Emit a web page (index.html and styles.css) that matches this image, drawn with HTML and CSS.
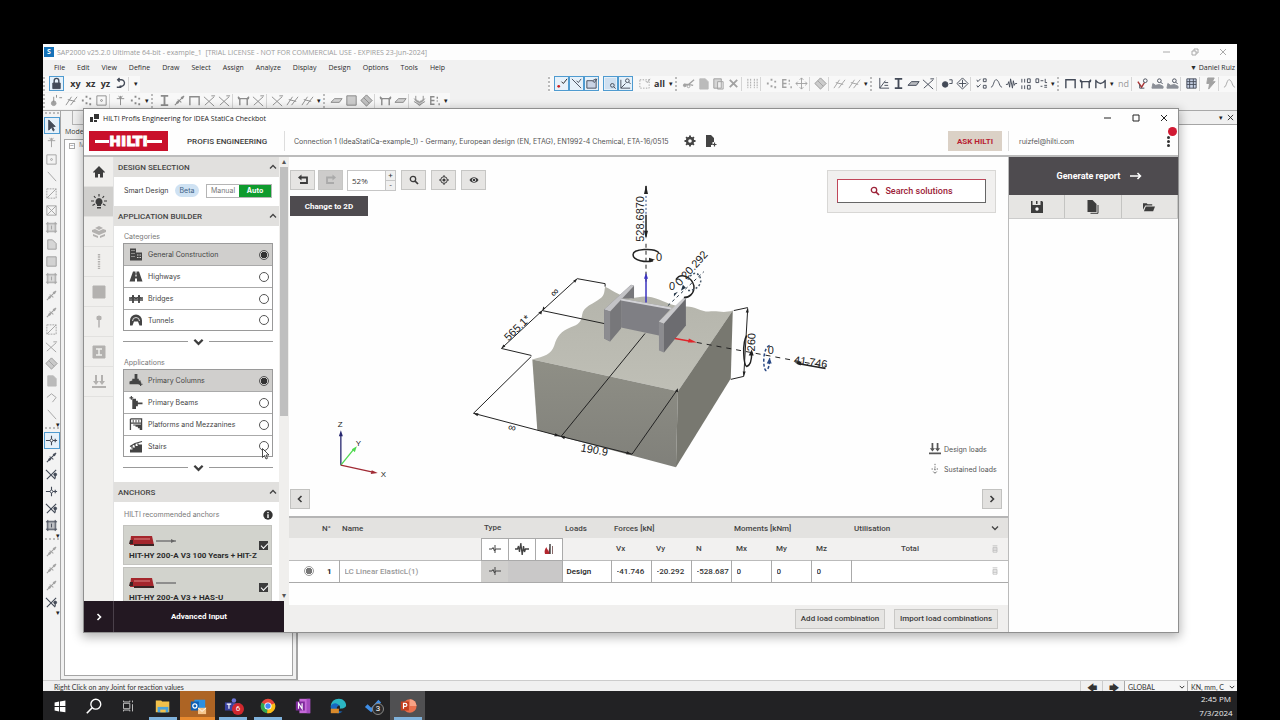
FILE: index.html
```html
<!DOCTYPE html>
<html lang="en">
<head>
<meta charset="utf-8">
<title>HILTI Profis Engineering for IDEA StatiCa Checkbot</title>
<link rel="stylesheet" href="styles.css">
</head>
<body>
<svg class="sprite" aria-hidden="true">
  <symbol id="t-lock" viewBox="0 0 14 14"><path d="M3 6.500h8V12.500H3z" fill="currentColor"/><path d="M4.500 7V4a2.500 2.500 0 0 1 5 0v3" stroke-width="1.500"/></symbol>
  <symbol id="t-rot" viewBox="0 0 14 14"><path d="M4 3h4a3.500 3.500 0 1 1-2 6.500M3 11h5M6 1L4 3l2 2" stroke-width="1.500"/></symbol>
  <symbol id="t-point" viewBox="0 0 14 14"><path d="M7 5l2 2 4-5" stroke="#222"/><circle cx="4" cy="10" r="1.500" fill="#c22" stroke="none"/></symbol>
  <symbol id="t-line" viewBox="0 0 14 14"><path d="M2 2l10 10M7 4l2 2 3-4"/></symbol>
  <symbol id="t-area" viewBox="0 0 14 14"><path d="M2 4h6l4-2v10H2z" fill="#c9d3e4"/><path d="M8 4l2 2 3-4"/></symbol>
  <symbol id="t-zoomr" viewBox="0 0 14 14"><path d="M1 1h12v12H1z" fill="#cfe0f0" stroke="none"/><circle cx="9" cy="9" r="2"/><path d="M10.500 10.500l2 2"/></symbol>
  <symbol id="t-zoom" viewBox="0 0 14 14"><path d="M2 3v9h10M2 12l5-5" /><circle cx="9" cy="4" r="2"/><path d="M10.500 5.500l2 2"/></symbol>
  <symbol id="t-dash" viewBox="0 0 14 14"><path d="M2 3h10v9H2z" stroke-dasharray="1.500 1.500"/><path d="M8 4l2 2 3-4"/></symbol>
  <symbol id="t-cut" viewBox="0 0 14 14"><path d="M2 8h5l6-5M7 8l5 1" stroke-width="1.500"/><circle cx="3" cy="9" r="1.500" fill="currentColor"/><circle cx="7" cy="10" r="1.500"/></symbol>
  <symbol id="t-copy" viewBox="0 0 14 14"><path d="M3 2h6l3 3v8H3z" fill="currentColor" opacity=".7"/></symbol>
  <symbol id="t-paste" viewBox="0 0 14 14"><path d="M2 2h8v10H2z" fill="currentColor" opacity=".4"/><path d="M6 5h6v8H6z" fill="#eee"/><path d="M2 2h8v10H2z"/></symbol>
  <symbol id="t-x" viewBox="0 0 14 14"><path d="M3 3l8 8M11 3l-8 8" stroke-width="2"/></symbol>
  <symbol id="t-bars" viewBox="0 0 14 14"><path d="M2 2v10M5 2v10M9 2v10M12 2v10" stroke-dasharray="2 1"/></symbol>
  <symbol id="t-dots" viewBox="0 0 14 14"><path d="M2 7h2M6 3h2M6 10h2M10 5h2M10 11h2" stroke-width="2"/></symbol>
  <symbol id="t-e" viewBox="0 0 14 14"><path d="M7 3H3v8h4M3 7h4M10 3v2M10 7v1M12 10v2" stroke-width="1.500"/></symbol>
  <symbol id="t-move" viewBox="0 0 14 14"><path d="M7 1v12M1 7h12M5 3l2-2 2 2M5 11l2 2 2-2M3 5L1 7l2 2M11 5l2 2-2 2"/></symbol>
  <symbol id="t-diam" viewBox="0 0 14 14"><path d="M7 1l6 6-6 6-6-6z" fill="currentColor" opacity=".5"/><path d="M4 4l6 6M7 1l6 6-6 6-6-6z"/></symbol>
  <symbol id="t-hatch" viewBox="0 0 14 14"><path d="M1 12l6-9M6 12l7-9M3 6l8 2"/></symbol>
  <symbol id="t-axis" viewBox="0 0 14 14"><path d="M3 1v11h10M3 12l6-8M8 6h4M8 9h4"/></symbol>
  <symbol id="t-I" viewBox="0 0 14 14"><path d="M3 2h8M3 12h8M7 2v10" stroke-width="2"/></symbol>
  <symbol id="t-plate" viewBox="0 0 14 14"><path d="M1 9l4-4h8l-3 4z" fill="currentColor" opacity=".35"/><path d="M1 9l4-4h8l-3 4z"/></symbol>
  <symbol id="t-cross" viewBox="0 0 14 14"><path d="M1 3l11 10M2 12L12 3M9 2h4"/></symbol>
  <symbol id="t-ball" viewBox="0 0 14 14"><circle cx="4.500" cy="8" r="3" fill="currentColor"/><path d="M9 3h3v4H9"/></symbol>
  <symbol id="t-dcross" viewBox="0 0 14 14"><path d="M7 1l6 6-6 6-6-6zM7 3v8M3 7h8"/></symbol>
  <symbol id="t-chk" viewBox="0 0 14 14"><path d="M2 3l1 2 3-3M2 9l1 2 3-3M9 2h3v3H9zM9 9h3v3H9z"/></symbol>
  <symbol id="t-curve" viewBox="0 0 14 14"><path d="M1 11C4 11 4 2 7 3s3 8 6 8"/></symbol>
  <symbol id="t-wave" viewBox="0 0 14 14"><path d="M1 8h2l1-3 1 6 1-9 2 10 1-8 1 5 1-2h2"/></symbol>
  <symbol id="t-nums" viewBox="0 0 14 14"><path d="M2 2v4M5 2v4M8 2h3v4H8zM2 9v4M5 9v4M8 9h3v4H8z"/></symbol>
  <symbol id="t-dl" viewBox="0 0 14 14"><path d="M1 2h3v4H1zM6 4h3M11 2v4h2M6 10h2M10 9h3M10 11h3"/></symbol>
  <symbol id="t-frame" viewBox="0 0 14 14"><path d="M2 12V3h10v9" stroke-width="1.500"/></symbol>
  <symbol id="t-frame2" viewBox="0 0 14 14"><path d="M3 12V5h8v7M1 3l3 3M10 6l3-3M1 5h12" stroke-width="1.500"/></symbol>
  <symbol id="t-frame3" viewBox="0 0 14 14"><path d="M2 12V3M12 12V3M2 4c4 4 6 4 10 0" stroke-width="1.500"/></symbol>
  <symbol id="t-red" viewBox="0 0 14 14"><path d="M2 5l4 6 3-5" stroke="#a33" stroke-width="1.500"/><path d="M4 8v4h5"/><circle cx="10" cy="4" r="2"/></symbol>
  <symbol id="t-chart" viewBox="0 0 14 14"><path d="M1 12h12v-2l-4-2-4 1-3-2z" fill="currentColor" opacity=".6"/><circle cx="9" cy="4" r="2"/><path d="M10.500 5.500l2 2"/></symbol>
  <symbol id="t-table" viewBox="0 0 14 14"><path d="M2 2h10v10H2z" fill="#c8d2e6"/><path d="M2 5h10M2 8h10M5 2v10M9 2v10"/></symbol>
  <symbol id="t-bolt" viewBox="0 0 14 14"><path d="M4 1h7L9 5h3L5 13l1-6H3z" fill="currentColor"/></symbol>
  <symbol id="t-arrow" viewBox="0 0 14 14"><path d="M4 1v11l3-3 2 4 1-1-2-4h3z" fill="currentColor"/></symbol>
  <symbol id="t-node" viewBox="0 0 14 14"><path d="M7 2v10M3 5h8M5 2l2 3 2-3"/></symbol>
  <symbol id="t-box" viewBox="0 0 14 14"><path d="M2 2h10v10H2z"/><circle cx="7" cy="7" r="1"/></symbol>
  <symbol id="t-diag" viewBox="0 0 14 14"><path d="M3 2l9 10"/></symbol>
  <symbol id="t-boxd" viewBox="0 0 14 14"><path d="M2 2h10v10H2z" stroke-dasharray="2 1"/><path d="M2 12L12 2"/></symbol>
  <symbol id="t-boxx" viewBox="0 0 14 14"><path d="M2 2h10v10H2zM2 12L12 2M2 2l10 10"/></symbol>
  <symbol id="t-grid" viewBox="0 0 14 14"><path d="M2 2h10v10H2z" fill="currentColor" opacity=".3"/><path d="M1 3h12M1 11h12M3 1v12M11 1v12M7 5v4"/></symbol>
  <symbol id="t-poly" viewBox="0 0 14 14"><path d="M3 2h5l4 4v6H3z" fill="currentColor" opacity=".35"/><path d="M3 2h5l4 4v6H3z"/></symbol>
  <symbol id="t-sq" viewBox="0 0 14 14"><path d="M2 2h10v10H2z" fill="currentColor" opacity=".4"/><path d="M2 2h10v10H2z"/></symbol>
  <symbol id="t-seg" viewBox="0 0 14 14"><path d="M2 12L12 2M5 6l4 3" stroke-width="1.200"/><circle cx="5" cy="9" r="1" fill="currentColor"/><circle cx="10" cy="4" r="1" fill="currentColor"/></symbol>
  <symbol id="t-plus" viewBox="0 0 14 14"><path d="M1 7h12M7 2v10M11 5v4" stroke-width="1.200"/><circle cx="7" cy="7" r="1.500" fill="#fff"/></symbol>
  <symbol id="t-xd" viewBox="0 0 14 14"><path d="M1 2l10 10M2 12L12 2M11 7v4" stroke-width="1.200"/><circle cx="11" cy="7" r="1.500" fill="currentColor"/></symbol>
  <symbol id="t-hook" viewBox="0 0 14 14"><path d="M2 7l5-4 5 4-4 5"/></symbol>
  <symbol id="t-drop" viewBox="0 0 14 14"><path d="M4 3v6M7 1v3M10 4h3" /><circle cx="4" cy="10" r="2.500" fill="currentColor" opacity=".8"/></symbol>
  <symbol id="t-cube" viewBox="0 0 14 14"><path d="M1 5l6 3 6-3-6 8z" fill="currentColor" opacity=".5"/><path d="M3 2v5l4 2 4-2V2M1 8l6 4 6-4"/></symbol>

  <symbol id="i-min" viewBox="0 0 8 8"><path d="M0 4h7"/></symbol>
  <symbol id="i-max" viewBox="0 0 8 8"><path d="M1 1h6v6H1z"/></symbol>
  <symbol id="i-restore" viewBox="0 0 8 8"><path d="M1 3h4v4H1zM3 3V1h4v4H5"/></symbol>
  <symbol id="i-close" viewBox="0 0 8 8"><path d="M1 1l6 6M7 1L1 7"/></symbol>
  <symbol id="i-up" viewBox="0 0 8 8"><path d="M1 5.500L4 2.500l3 3" stroke-width="1.300"/></symbol>
  <symbol id="i-down" viewBox="0 0 8 8"><path d="M1 2.500L4 5.500l3-3" stroke-width="1.300"/></symbol>
  <symbol id="i-more" viewBox="0 0 12 8"><path d="M1.500 1.500L6 6l4.500-4.500" stroke-width="2.500"/></symbol>
  <symbol id="i-left" viewBox="0 0 8 8"><path d="M5.500 1l-3 3 3 3" stroke-width="1.600"/></symbol>
  <symbol id="i-right" viewBox="0 0 8 8"><path d="M2.500 1l3 3-3 3" stroke-width="1.600"/></symbol>
  <symbol id="i-search" viewBox="0 0 10 10"><circle cx="4" cy="4" r="2.700" stroke-width="1.300"/><path d="M6 6l3 3" stroke-width="1.700"/></symbol>
  <symbol id="i-gear" viewBox="0 0 12 12"><circle cx="6" cy="6" r="3" stroke-width="2.400"/><path d="M6 .5v2M6 9.500v2M.5 6h2M9.500 6h2M2.100 2.100l1.500 1.500M8.400 8.400l1.500 1.500M2.100 9.900l1.500-1.500M8.400 3.600l1.500-1.500" stroke-width="1.900"/></symbol>
  <symbol id="i-docplus" viewBox="0 0 12 12"><path d="M1 0h5l3 3v4H7.500v3H6v2H1z" fill="currentColor" stroke="none"/><path d="M9.500 7.500v4M7.500 9.500h4" stroke-width="1.200"/></symbol>
  <symbol id="i-undo" viewBox="0 0 12 12"><path d="M3 3.500h7v5.500H3" stroke-width="1.800"/><path d="M4.500.5L1 3.500l3.500 3z" fill="currentColor" stroke="none"/></symbol>
  <symbol id="i-redo" viewBox="0 0 12 12"><path d="M9 3.500H2v5.500h7" stroke-width="1.800"/><path d="M7.500.5L11 3.500l-3.500 3z" fill="currentColor" stroke="none"/></symbol>
  <symbol id="i-target" viewBox="0 0 10 10"><circle cx="5" cy="5" r="3.300"/><circle cx="5" cy="5" r="1.600" fill="currentColor" stroke="none"/><path d="M5 0v2M5 8v2M0 5h2M8 5h2"/></symbol>
  <symbol id="i-eye" viewBox="0 0 10 10"><path d="M.5 5C2.500 1.300 7.500 1.300 9.500 5 7.500 8.700 2.500 8.700.5 5z" fill="currentColor" stroke="none"/><circle cx="5" cy="5" r="1.700" stroke="#eee" stroke-width=".8"/></symbol>
  <symbol id="i-home" viewBox="0 0 12 12"><path d="M6 0l6 6-1 1-1-1v5.500H7V8H5v3.500H2V6L1 7 0 6z" fill="currentColor" stroke="none"/></symbol>
  <symbol id="i-bulb" viewBox="0 0 16 16"><path d="M8 4a3.700 3.700 0 0 1 2 6.700V12H6v-1.300A3.700 3.700 0 0 1 8 4zM6 13h4v1.500H6z" fill="currentColor" stroke="none"/><path d="M8 0v2.500M3 2l1.500 2M13 2l-1.500 2M0 7h3M13 7h3M1.500 11.500L4 10M14.500 11.500L12 10" stroke-width="1.200"/></symbol>
  <symbol id="i-base" viewBox="0 0 14 14"><path d="M7 1l4 2-4 2-4-2zM0 5l3-1 4 2 4-2 3 1v2l-7 3-7-3zM1 9l5 2v2L1 11zM13 9l-5 2v2l5-2z" fill="currentColor" stroke="none"/></symbol>
  <symbol id="i-bolt" viewBox="0 0 6 16"><path d="M3 0v16" stroke-width="2.500" stroke-dasharray="1.500 1"/></symbol>
  <symbol id="i-square" viewBox="0 0 14 14"><path d="M1 1h12v12H1z" fill="currentColor"/></symbol>
  <symbol id="i-pin" viewBox="0 0 6 14"><path d="M3 1v12" stroke-width="1.500"/><path d="M1 2h4v3H1z" fill="currentColor"/></symbol>
  <symbol id="i-prof" viewBox="0 0 14 14"><path d="M1 1h12v12H1z" fill="currentColor"/><path d="M4 4h6M4 10h6M7 4v6" stroke="#f0efed" stroke-width="1.500"/></symbol>
  <symbol id="i-loads" viewBox="0 0 14 14"><path d="M4 0v8M10 0v8M0 12h14" stroke-width="2"/><path d="M1 6h6L4 10zM7 6h6l-3 4z" fill="currentColor" stroke="none"/></symbol>
  <symbol id="i-susp" viewBox="0 0 14 14"><path d="M7 1v9M3 7h8" stroke-dasharray="1.500 1.500"/><path d="M5 10l2 2 2-2"/></symbol>
  <symbol id="i-building" viewBox="0 0 14 12"><path d="M1 0h6v4h6v8H1z" fill="currentColor" stroke="none"/><path d="M2.500 2h1M4.500 2h1M2.500 5h1M4.500 5h1M2.500 8h1M4.500 8h1M8 6.500h1.500M10.500 6.500H12M8 9h1.500M10.500 9H12" stroke="#d3d1cf" stroke-width="1.200"/></symbol>
  <symbol id="i-road" viewBox="0 0 14 12"><path d="M4 1h2.500v2h1V1H10l3.500 10H8V8H6v3H.5z" fill="currentColor" stroke="none"/><path d="M7 4v2" stroke="#fff" stroke-width="1.200"/></symbol>
  <symbol id="i-bridge" viewBox="0 0 14 12"><path d="M0 5.500h14M0 7.500h14" stroke-width="1.300"/><path d="M4 2.500v8M10 2.500v8" stroke-width="1.800"/><path d="M1.500 6.500L4 3.500l3 3 3-3 2.500 3"/></symbol>
  <symbol id="i-tunnel" viewBox="0 0 14 12"><path d="M1 11V6a6 6 0 0 1 12 0v5h-2.500L9 7H5l-1.500 4z" fill="currentColor" stroke="none"/><path d="M3.500 6.500a3.500 3.500 0 0 1 7 0" stroke="#fff" stroke-width=".8"/></symbol>
  <symbol id="i-column" viewBox="0 0 14 14"><path d="M5.500 0h3v5H10v2h2v4H0V8l3-1V5h2.500z" fill="currentColor" stroke="none"/><path d="M12 9v4M10 11h4" stroke-width="1.200"/></symbol>
  <symbol id="i-beam" viewBox="0 0 14 14"><path d="M3 3h4v2h2v2h5v2H9v2H7v3H3z" fill="currentColor" stroke="none"/><path d="M2 0v4M0 2h4" stroke-width="1.200"/></symbol>
  <symbol id="i-platform" viewBox="0 0 14 14"><path d="M1 1h12v12M1 1v12M1 5.500h12" stroke-width="1.400"/><path d="M4 2v3M7 2v3M10 2v3"/><path d="M4 7h9v6h-2v-2H9V9.500H6.500V8H4z" fill="currentColor" stroke="none"/></symbol>
  <symbol id="i-stairs" viewBox="0 0 14 12"><path d="M1 12V9h2.500V7H6V5.500h3V4h4v8z" fill="currentColor" stroke="none"/><path d="M1 6l5-3 7-2M3 5v3M6 3v3M9 2v3" stroke-width="1.200"/></symbol>
  <symbol id="i-info" viewBox="0 0 10 10"><circle cx="5" cy="5" r="4.700" fill="currentColor" stroke="none"/><path d="M5 2v1.300M5 4.300V8" stroke="#fff" stroke-width="1.400"/></symbol>
  <symbol id="i-arrow" viewBox="0 0 12 8"><path d="M0 4h10.500M7.500 1l3 3-3 3" stroke-width="1.500"/></symbol>
  <symbol id="i-save" viewBox="0 0 12 12"><path d="M0 0h1.500v4h8V0H11l1 1v11H0z" fill="currentColor" stroke="none"/><path d="M5 0h1.500v3H5z" fill="currentColor" stroke="none"/><circle cx="6" cy="8" r="1.700" fill="#fff" stroke="none"/></symbol>
  <symbol id="i-docs" viewBox="0 0 13 14"><path d="M1 0h5l4 4v8H1z" fill="currentColor" stroke="none"/><path d="M11.500 5v8.300H4"/></symbol>
  <symbol id="i-folder" viewBox="0 0 13 10"><path d="M0 8V1h4l1 1h5v1.500H2.500zM3 4.500h10L11 9.500H1z" fill="currentColor" stroke="none"/></symbol>
  <symbol id="i-static" viewBox="0 0 12 12"><path d="M0 6h3l1-1.500L5.500 8l1-2H12M6 2v8"/></symbol>
  <symbol id="i-seis" viewBox="0 0 14 12"><path d="M0 6h2.500l1-3 1 6 1.300-9 1.400 12 1.300-9 1 6 1-3H14" stroke-width="1.300"/></symbol>
  <symbol id="i-fire" viewBox="0 0 12 12"><path d="M2 11C1 8 2 6 3.500 4c0 2 2 2 1.500 5l2-5v7z" fill="#b3262e" stroke="none"/><path d="M7 1v10" stroke-width="1.500"/><path d="M9.500 3v8" stroke="#8a6a6a"/></symbol>
  <symbol id="i-trash" viewBox="0 0 8 10"><path d="M1 1h6M1.500 3h5v6h-5zM1.500 5h5M1.500 7h5"/></symbol>
</svg>

<div class="screen">
  <div class="sap">
    <header class="sap-title">
      <span class="sap-logo">S</span>
      <span class="sap-name">SAP2000 v25.2.0 Ultimate 64-bit - example_1&nbsp; [TRIAL LICENSE - NOT FOR COMMERCIAL USE - EXPIRES 23-Jun-2024]</span>
      <span class="win-btns faded">
        <button aria-label="Minimize"><svg><use href="#i-min"/></svg></button>
        <button aria-label="Restore"><svg><use href="#i-restore"/></svg></button>
        <button aria-label="Close"><svg><use href="#i-close"/></svg></button>
      </span>
    </header>
    <nav class="sap-menu">
      <button>File</button><button>Edit</button><button>View</button><button>Define</button><button>Draw</button><button>Select</button><button>Assign</button><button>Analyze</button><button>Display</button><button>Design</button><button>Options</button><button>Tools</button><button>Help</button>
      <button class="user">▼ Daniel Ruiz</button>
    </nav>
    <div class="sap-row">
      <div class="tools" data-items="h *lock _ =xy =xz =yz rot | v"></div>
      <div class="tools far" data-items="h *point *line *area _ *zoomr *zoom _ -dash =all v h -cut -copy -paste -x | -bars | -dots -e -move | -diam | -hatch -hatch v h axis I plate cross | ball dcross | chk curve wave nums dl v h frame frame2 frame3 v ~nd | red chart chart | table | -bolt | -curve"></div>
    </div>
    <div class="sap-row">
      <div class="tools mid" data-items="h drop hatch dots box | node dots v h I seg frame cross cross | frame2 cross | cross hatch hatch v h plate sq diam | frame2 plate | cube e v"></div>
    </div>
    <div class="sap-body">
      <div class="tools vert" data-items="h *arrow -node -box -diag -boxd -boxx -grid -poly -sq -grid -seg -seg -boxd -cross -diam -copy -hook -diag v h *plus seg xd plus xd grid v h -seg -seg -seg xd v"></div>
      <aside class="model">
        <div class="model-tabs"></div>
        <div class="model-title">Model</div>
        <div class="tree"><span class="tree-box">−</span>M</div>
      </aside>
      <section class="mdi">
        <div class="mdi-bar"><span>▾</span><svg><use href="#i-close"/></svg></div>
      </section>
    </div>
    <footer class="status">
      <span class="status-msg">Right Click on any Joint for reaction values</span>
      <button aria-label="Previous">🡄</button>
      <button aria-label="Next">🡆</button>
      <label class="pick coord"><select aria-label="Coordinate system"><option>GLOBAL</option></select><svg><use href="#i-down"/></svg></label>
      <label class="pick units"><select aria-label="Units"><option>KN, mm, C</option></select><svg><use href="#i-down"/></svg></label>
    </footer>
  </div>

  <div class="hilti">
    <header class="h-title">
      <svg class="app-ico" viewBox="0 0 9 9"><path d="M4 0h5v5H4zM0 3h3v5H0zM4 6h3v2H4z" fill="#333" stroke="none"/></svg>
      <span>HILTI Profis Engineering for IDEA StatiCa Checkbot</span>
      <span class="win-btns">
        <button aria-label="Minimize"><svg><use href="#i-min"/></svg></button>
        <button aria-label="Maximize"><svg><use href="#i-max"/></svg></button>
        <button aria-label="Close"><svg><use href="#i-close"/></svg></button>
      </span>
    </header>
    <div class="h-head">
      <svg class="logo" viewBox="0 0 79 20"><path d="M0 0h79v20H0z" fill="#c9102b" stroke="none"/><path d="M6 9h14v3H6zM58 9h15v3H58z" fill="#fff" stroke="none"/><text x="39.500" y="15" text-anchor="middle">HILTI</text></svg>
      <span class="product">PROFIS ENGINEERING</span>
      <div class="h-file">
        <span>Connection 1 (IdeaStatiCa-example_1) - Germany, European design (EN, ETAG), EN1992-4 Chemical, ETA-16/0515</span>
        <button class="bare" aria-label="Settings"><svg class="s12"><use href="#i-gear"/></svg></button>
        <button class="bare" aria-label="Save as template"><svg class="s12"><use href="#i-docplus"/></svg></button>
      </div>
      <button class="ask">ASK HILTI</button>
      <div class="account"><span>ruizfel@hilti.com</span><button class="dots" aria-label="Menu"><i></i><i></i><i></i><b class="alert"></b></button></div>
    </div>

    <div class="h-body">
      <div class="left">
        <div class="left-top">
          <nav class="rail">
            <button aria-label="Home"><svg class="s12"><use href="#i-home"/></svg></button>
            <button class="on" aria-label="Design"><svg class="s16"><use href="#i-bulb"/></svg></button>
            <button class="off" aria-label="Base material"><svg class="s14"><use href="#i-base"/></svg></button>
            <button class="off" aria-label="Anchor"><svg class="bolt"><use href="#i-bolt"/></svg></button>
            <button class="off" aria-label="Plate"><svg class="s14"><use href="#i-square"/></svg></button>
            <button class="off" aria-label="Stiffener"><svg class="bolt"><use href="#i-pin"/></svg></button>
            <button class="off" aria-label="Profile"><svg class="s14"><use href="#i-prof"/></svg></button>
            <button class="off" aria-label="Loads"><svg class="s14"><use href="#i-loads"/></svg></button>
          </nav>
          <div class="panel">
            <h2>DESIGN SELECTION<svg><use href="#i-up"/></svg></h2>
            <div class="smart">
              <span>Smart Design</span><span class="beta">Beta</span>
              <div class="toggle"><button>Manual</button><button class="go">Auto</button></div>
            </div>
            <h2>APPLICATION BUILDER<svg><use href="#i-up"/></svg></h2>
            <p class="lbl">Categories</p>
            <div class="list">
              <label><svg><use href="#i-building"/></svg>General Construction<input type="radio" name="cat" checked></label>
              <label><svg><use href="#i-road"/></svg>Highways<input type="radio" name="cat"></label>
              <label><svg><use href="#i-bridge"/></svg>Bridges<input type="radio" name="cat"></label>
              <label><svg><use href="#i-tunnel"/></svg>Tunnels<input type="radio" name="cat"></label>
            </div>
            <button class="more" aria-label="More categories"><svg><use href="#i-more"/></svg></button>
            <p class="lbl">Applications</p>
            <div class="list">
              <label><svg><use href="#i-column"/></svg>Primary Columns<input type="radio" name="app" checked></label>
              <label><svg><use href="#i-beam"/></svg>Primary Beams<input type="radio" name="app"></label>
              <label><svg><use href="#i-platform"/></svg>Platforms and Mezzanines<input type="radio" name="app"></label>
              <label><svg><use href="#i-stairs"/></svg>Stairs<input type="radio" name="app">
                <svg class="cursor" viewBox="0 0 8 12"><path d="M.5.5v9l2-2 1.500 3.500 1.500-.7L4 7h3z" fill="#fff" stroke="#222" stroke-width=".8"/></svg></label>
            </div>
            <button class="more" aria-label="More applications"><svg><use href="#i-more"/></svg></button>
            <h2>ANCHORS<svg><use href="#i-up"/></svg></h2>
            <p class="lbl rec">HILTI recommended anchors<svg><use href="#i-info"/></svg></p>
            <label class="card">
              <svg class="anchor" viewBox="0 0 48 12"><path d="M2 1h21l2 9H1z" fill="#a4262c" stroke="none"/><path d="M1 5h3v4H0zM5 9h20v2H5z" fill="#3a2424" stroke="none"/><path d="M5 4h16" stroke="#d88"/><path d="M27 6h20" stroke="#777" stroke-width="1.500"/><path d="M42 4l4 2-4 2z" fill="#666" stroke="none"/></svg>
              <span>HIT-HY 200-A V3 100 Years + HIT-Z</span><input type="checkbox" checked>
            </label>
            <label class="card">
              <svg class="anchor" viewBox="0 0 48 12"><path d="M2 1h21l2 9H1z" fill="#a4262c" stroke="none"/><path d="M1 5h3v4H0zM5 9h20v2H5z" fill="#3a2424" stroke="none"/><path d="M5 4h16" stroke="#d88"/><path d="M27 6h20" stroke="#777" stroke-width="1.500"/></svg>
              <span>HIT-HY 200-A V3 + HAS-U</span><input type="checkbox" checked>
            </label>
          </div>
          <div class="vscroll"><span>▴</span><i></i><span class="end">▾</span></div>
        </div>
        <div class="advanced"><button aria-label="Expand"><svg class="s8"><use href="#i-right"/></svg></button><button class="adv">Advanced Input</button></div>
      </div>

      <main class="center">
        <div class="stage">
          <svg class="scene" viewBox="289 157 719 360">
            <defs>
              <linearGradient id="gf" x1="0" y1="0" x2="0" y2="1"><stop offset="0" stop-color="#8f8f86"/><stop offset="1" stop-color="#80807a"/></linearGradient>
              <linearGradient id="gt" x1="0" y1="0" x2="0" y2="1"><stop offset="0" stop-color="#b4b4ab"/><stop offset="1" stop-color="#bfbfb6"/></linearGradient>
            </defs>
            <g stroke="none">
              <path d="M532 360c12-3 19-5 22-14 3-10 7-14 16-18 9-3 11-6 12-13 1-8 12-11 18-16 5-4 4-8 5-12 10 5 16 10 26 12 9-2 17-4 28 1 10 4 15 7 26 7 9-1 15 5 24 5 10-1 14 2 24-1l-55 81z" fill="url(#gt)"/>
              <path d="M532 360l146 32-2 76-139-37z" fill="url(#gf)"/>
              <path d="M678 392l55-81-2 68-55 89z" fill="#787870"/>
              <path d="M604 310l27-25 3 1v13h-13v30l-11 13-6-3z" fill="#77777a"/>
              <path d="M604 310l27-25 3 1-24 26z" fill="#c3c3c6"/>
              <path d="M604 310l6 2v30l-6-3z" fill="#8c8c90"/>
              <path d="M621 299l51 9-13 14v14l-38-8z" fill="#7f7f84"/>
              <path d="M621 299l51 9-1 2-50-9z" fill="#d2d2d6"/>
              <path d="M659 322l5 2v29l-5-2z" fill="#8c8c90"/>
              <path d="M664 323l22-26v29l-22 27z" fill="#6c6c70"/>
              <path d="M659 322l26-25 2 1-23 26z" fill="#c9c9cc"/>
            </g>
            <g stroke="#222" stroke-width="1">
              <path d="M577 279l28 5v3M542 311l62 13M577 279l-35 32-41 38 30 7M531 357l-58 57 87 23 72 18M645 334l-84 103M677 391l-45 64M734 311l14-3M748 309l-4 68-13 3"/>
            </g>
            <g fill="#222" stroke="none">
              <path d="M577 279l-2 4-2-2zM542 311l-1 4-3-2zM542 311l1-4 2 2zM501 349l2-4 2 2zM473 414l5 0-1 3zM560 437l-5-3-1 3zM560 437l5 0-1 3zM632 455l-5-3-1 3zM748 308l-2 5h3zM744 377l-1-5h3zM678 389l-3 3 3 1z"/>
            </g>
            <path d="M646 186v6M646 215v22" stroke="#222" stroke-width="1.500"/>
            <path d="M646 192v24" stroke="#2b4a86" stroke-dasharray="2 2"/>
            <path d="M646 244v38" stroke="#222" stroke-dasharray="4 3"/>
            <path d="M646 185l-2 9h4zM646 239l-2-8h4z" fill="#222" stroke="none"/>
            <path d="M646 303v-25" stroke="#3a32c0" stroke-width="1.500"/><path d="M646 273l-2 6h4z" fill="#3a32c0" stroke="none"/>
            <path d="M659 253c-5-5-26-4-26 2s13 8 20 6" stroke="#222" stroke-width="1.500"/><path d="M655 260l-6-2v4z" fill="#222" stroke="none"/>
            <path d="M668 306l36-34" stroke="#234" stroke-dasharray="3 3"/>
            <path d="M676 280c5-8 16-2 18 6 1 8-5 12-10 12" stroke="#222" stroke-width="1.500"/>
            <path d="M688 280c5-9 11-8 13 0 0 6-5 11-14 11" stroke="#456" stroke-dasharray="2 2" stroke-width="1.500"/>
            <path d="M683 285l-2 6 5-3zM678 292l-4 5 0-3z" fill="#234" stroke="none"/>
            <path d="M675 339l17 3" stroke="#e0262b" stroke-width="1.500"/><path d="M697 343l-8-4-1 4z" fill="#e0262b" stroke="none"/>
            <path d="M697 343l130 24" stroke="#222" stroke-dasharray="5 5"/>
            <path d="M747 336c-5 8-3 30 0 31 4-1 5-8 5-14" stroke="#222" stroke-width="1.500"/><path d="M752 350l-3 6h5z" fill="#222" stroke="none"/>
            <path d="M770 346c-7 2-7 22-4 25 3 0 4-7 4-12" stroke="#2b4a86" stroke-width="1.500" stroke-dasharray="3 2"/><path d="M770 358l-3 6h5z" fill="#2b4a86" stroke="none"/>
            <path d="M826 369l-28-5" stroke="#222" stroke-width="1.500"/><path d="M795 363l7-1-1 4z" fill="#222" stroke="none"/>
            <text class="dim" transform="translate(644 242) rotate(-90)">528.6870</text>
            <text class="dim" x="656" y="261">0</text>
            <text class="dim" transform="translate(680 287) rotate(-48)">0 20.292</text>
            <text class="dim" x="669" y="290">0</text>
            <text class="dim" transform="translate(508 342) rotate(-44)">565.1*</text>
            <text class="dim" transform="translate(554 298) rotate(-44)">∞</text>
            <text class="dim" transform="translate(507 431) rotate(12)">∞</text>
            <text class="dim" transform="translate(580 452) rotate(10)">190.9</text>
            <text class="dim" transform="translate(755 352) rotate(-88)">260</text>
            <text class="dim" x="768" y="355">0</text>
            <text class="dim" transform="translate(794 364) rotate(8)">41.746</text>
            <path d="M340 466v-30" stroke="#26266e" stroke-width="1.300"/><path d="M340 431l-2 6h4z" fill="#26266e" stroke="none"/>
            <path d="M340 466l13-16" stroke="#4fd94f" stroke-width="1.300"/><path d="M356 447l-5 3 3 3z" fill="#4fd94f" stroke="none"/>
            <path d="M340 466l32 7" stroke="#a02a34" stroke-width="1.300"/><path d="M377 474l-6-3-1 4z" fill="#a02a34" stroke="none"/>
            <text class="ax" x="337" y="428">Z</text><text class="ax" x="355" y="447">Y</text><text class="ax" x="380" y="478">X</text>
          </svg>
          <div class="stage-top">
            <div>
              <div class="tb">
                <button aria-label="Undo"><svg class="s12"><use href="#i-undo"/></svg></button>
                <button class="dis" aria-label="Redo"><svg class="s12"><use href="#i-redo"/></svg></button>
                <div class="spin"><input value="52%" aria-label="Zoom"><div><button>+</button><button>-</button></div></div>
                <button class="sp" aria-label="Zoom window"><svg class="s10"><use href="#i-search"/></svg></button>
                <button class="sp" aria-label="Center"><svg class="s10"><use href="#i-target"/></svg></button>
                <button class="sp" aria-label="View"><svg class="s10"><use href="#i-eye"/></svg></button>
              </div>
              <button class="to2d">Change to 2D</button>
            </div>
            <div class="search"><button><svg class="s10"><use href="#i-search"/></svg>Search solutions</button></div>
          </div>
          <div class="stage-low">
            <div class="legend">
              <div><svg class="s12"><use href="#i-loads"/></svg>Design loads</div>
              <div><svg class="s12"><use href="#i-susp"/></svg>Sustained loads</div>
            </div>
            <div class="pager"><button aria-label="Previous"><svg class="s8"><use href="#i-left"/></svg></button><button aria-label="Next"><svg class="s8"><use href="#i-right"/></svg></button></div>
          </div>
        </div>
        <div class="loads">
          <table>
            <colgroup><col class="c30"><col class="c20"><col class="cname"><col class="c27"><col class="c27"><col class="c27"><col class="c49"><col class="c40"><col class="c40"><col class="c40"><col class="c40"><col class="c40"><col class="c40"><col><col class="c20"></colgroup>
            <thead>
              <tr class="r1"><th></th><th>N°</th><th>Name</th><th colspan="3">Type</th><th>Loads</th><th colspan="3">Forces [kN]</th><th colspan="3">Moments [kNm]</th><th>Utilisation</th><th><svg class="s8"><use href="#i-down"/></svg></th></tr>
              <tr class="r2"><td colspan="3"></td><td class="ty"><button aria-label="Static"><svg class="s12"><use href="#i-static"/></svg></button></td><td class="ty"><button aria-label="Seismic"><svg class="s14"><use href="#i-seis"/></svg></button></td><td class="ty"><button aria-label="Fire"><svg class="s12"><use href="#i-fire"/></svg></button></td><td></td><th>Vx</th><th>Vy</th><th>N</th><th>Mx</th><th>My</th><th>Mz</th><th class="tot">Total</th><td class="tr"><svg class="s8"><use href="#i-trash"/></svg></td></tr>
            </thead>
            <tbody>
              <tr class="r3"><td class="rd"><input type="radio" name="lc" aria-label="Load case 1" checked></td><td class="num">1</td><td class="in"><input class="lcname" aria-label="Name" value="LC Linear ElasticL(1)"></td><td class="sel"><button aria-label="Static"><svg class="s12"><use href="#i-static"/></svg></button></td><td class="gr" colspan="2"></td><td class="in b">Design</td><td class="in"><input aria-label="Vx" value="-41.746"></td><td class="in"><input aria-label="Vy" value="-20.292"></td><td class="in"><input aria-label="N" value="-528.687"></td><td class="in"><input aria-label="Mx" value="0"></td><td class="in"><input aria-label="My" value="0"></td><td class="in"><input aria-label="Mz" value="0"></td><td class="in"></td><td class="tr"><svg class="s8"><use href="#i-trash"/></svg></td></tr>
            </tbody>
          </table>
        </div>
        <div class="actions"><button>Add load combination</button><button>Import load combinations</button></div>
      </main>

      <aside class="right">
        <button class="report">Generate report<svg><use href="#i-arrow"/></svg></button>
        <div class="files"><button aria-label="Save"><svg class="s12"><use href="#i-save"/></svg></button><button aria-label="Copy"><svg class="s14"><use href="#i-docs"/></svg></button><button aria-label="Open"><svg class="s12"><use href="#i-folder"/></svg></button></div>
      </aside>
    </div>
  </div>

  <footer class="taskbar">
    <button class="sys" aria-label="Start"><svg viewBox="0 0 20 20"><path d="M4 6l5-1v5H4zM10 5l6-1v6h-6zM4 11h5v5l-5-1zM10 11h6v6l-6-1z" fill="#fff" stroke="none"/></svg></button>
    <button class="sys" aria-label="Search"><svg viewBox="0 0 20 20"><circle cx="12" cy="8" r="5.500" stroke="#fff" stroke-width="1.500"/><path d="M8 12l-6 6" stroke="#fff" stroke-width="1.800"/></svg></button>
    <button class="sys" aria-label="Task view"><svg viewBox="0 0 20 20"><path d="M5 7h7v6H5zM5 4v1.500h7V4M5 16v-1.500h7V16M15 4v2M15 8v8" stroke="#ccc"/></svg></button>
    <button class="run" aria-label="File Explorer"><svg viewBox="0 0 20 20"><path d="M2 4h6l1 1h8v12H2z" fill="#f2c14b" stroke="none"/><path d="M4 11h12v6H4z" fill="#4aa3dc" stroke="none"/><path d="M7 14h6v3H7z" fill="#f2c14b" stroke="none"/></svg></button>
    <button class="mail" aria-label="Outlook"><svg viewBox="0 0 20 20"><path d="M6 3h12v11H6z" fill="#2b8fe0" stroke="none"/><path d="M2 5h9v10H2z" fill="#0f5fb4" stroke="none"/><circle cx="6.500" cy="10" r="2.300" stroke="#fff" stroke-width="1.300"/><path d="M10 12h9v7h-9z" fill="#f7c68b" stroke="none"/><path d="M10 12l4.500 4 4.500-4" stroke="#fff"/></svg></button>
    <button class="run" aria-label="Teams"><svg viewBox="0 0 20 20"><circle cx="11" cy="4" r="2.500" fill="#6b74d6" stroke="none"/><path d="M7 7h11v8H7z" fill="#5058b8" stroke="none"/><path d="M1 6h9v9H1z" fill="#3a43a0" stroke="none"/><path d="M3 8h5M5.500 8v5" stroke="#fff" stroke-width="1.300"/></svg><b class="badge">6</b></button>
    <button class="run" aria-label="Chrome"><svg viewBox="0 0 20 20"><circle cx="10" cy="10" r="8" fill="#e8453c" stroke="none"/><path d="M10 10L3 6a8 8 0 0 0 6 12z" fill="#2fa84f" stroke="none"/><path d="M10 10l7.500-3A8 8 0 0 1 9 18z" fill="#fbc116" stroke="none"/><circle cx="10" cy="10" r="4" fill="#fff" stroke="none"/><circle cx="10" cy="10" r="3" fill="#4286f5" stroke="none"/></svg></button>
    <button aria-label="OneNote"><svg viewBox="0 0 20 20"><path d="M6 2h12v16H6z" fill="#c568d8" stroke="none"/><path d="M14 2h4v16h-4z" fill="#a54bc0" stroke="none"/><path d="M2 5h10v10H2z" fill="#7e2a9c" stroke="none"/><path d="M5 13V7l4 6V7" stroke="#fff" stroke-width="1.300"/></svg></button>
    <button aria-label="Edge"><svg viewBox="0 0 20 20"><path d="M2 11C2 5 6 2 11 2s8 4 8 7-3 4-7 4c1-3-1-5-4-4s-3 4-2 8c-3-2-4-4-4-6z" fill="#2bb6c4" stroke="none"/><path d="M2 10c2-4 8-4 9 0-4 0-3 7 4 6-4 4-13 2-13-6z" fill="#1768c0" stroke="none"/><path d="M2 13h9v5H2z" fill="#d98a2b" stroke="none"/></svg></button>
    <button aria-label="To Do"><svg viewBox="0 0 20 20"><path d="M1 11l3-3 4 4 8-9 3 3L8 17z" fill="#3f8ee6" stroke="none"/></svg><b class="badge dark">3</b></button>
    <button class="run cur" aria-label="PowerPoint"><svg viewBox="0 0 20 20"><circle cx="12" cy="10" r="7.500" fill="#e8704d" stroke="none"/><path d="M12 2.500a7.500 7.500 0 0 1 7.500 7.500H12z" fill="#f6a184" stroke="none"/><path d="M2 5h9v10H2z" fill="#c43e1c" stroke="none"/><path d="M5 13V7h2a1.700 1.700 0 0 1 0 3.500H5" stroke="#fff" stroke-width="1.300"/></svg></button>
    <div class="clock"><span>2:45 PM</span><span>7/3/2024</span></div>
  </footer>
</div>
<script src="toolbars.js"></script>
</body>
</html>
```

FILE: toolbars.js
```js
// Fills each toolbar from its item list.
// h grip, | separator, _ space, v drop arrow, * pressed, - disabled, = bold caption, ~ grey caption
document.querySelectorAll('.tools').forEach(function (bar) {
  bar.dataset.items.split(' ').forEach(function (item) {
    var kinds = { h: 'grip', '|': 'sep', _: 'space', v: 'drop' };
    var el;
    if (kinds[item]) {
      el = document.createElement('span');
      el.className = kinds[item];
      if (item === 'v') el.textContent = '▾';
    } else {
      var flag = item[0];
      var name = item.replace(/^[*\-=~]/, '');
      el = document.createElement('button');
      el.className = { '*': 'pressed', '-': 'disabled', '=': 'caption', '~': 'caption grey' }[flag] || '';
      if (flag === '=' || flag === '~') {
        el.textContent = name;
      } else {
        el.setAttribute('aria-label', name);
        el.innerHTML = '<svg><use href="#t-' + name + '"/></svg>';
      }
    }
    bar.appendChild(el);
  });
});
```

FILE: styles.css
```css
* { box-sizing: border-box; }
body {
  margin: 0;
  background: #000;
  font-family: Roboto, "Liberation Sans", sans-serif;
  font-size: 8px;
  color: #3b3b3b;
}
button, input, select { font: inherit; color: inherit; margin: 0; padding: 0; border: 0; background: none; border-radius: 0; }
button { display: flex; align-items: center; justify-content: center; white-space: nowrap; }
input { min-width: 0; outline: 0; }
h2, p { margin: 0; }
svg { fill: none; stroke: currentColor; flex: none; display: block; }
.sprite { position: absolute; width: 0; height: 0; }
.s8 { width: 8px; height: 8px; }
.s10 { width: 10px; height: 10px; }
.s12 { width: 12px; height: 12px; }
.s14 { width: 14px; height: 14px; }
.s16 { width: 16px; height: 16px; }

.screen {
  position: relative;
  height: calc(100vh - 44px);
  min-height: 600px;
  margin: 44px 43px 0;
  display: flex;
  flex-direction: column;
  overflow: hidden;
}

/* SAP2000 window */
.sap { flex: 1; min-height: 0; display: flex; flex-direction: column; background: #f1f1f1; font-family: "Open Sans", "Noto Sans", sans-serif; font-size: 7px; }
.sap-title { height: 16px; background: #fdfdfd; display: flex; align-items: center; gap: 3px; padding-left: 1px; color: #9a9a9a; }
.sap-logo { width: 10px; height: 10px; background: #1672b8; color: #fff; font-weight: bold; line-height: 10px; text-align: center; }
.win-btns { margin-left: auto; display: flex; }
.win-btns button { width: 28px; height: 16px; }
.win-btns svg { width: 8px; height: 8px; }
.sap-menu { height: 15px; display: flex; align-items: center; gap: 12px; padding-left: 11px; color: #2c2c2c; }
.user { margin-left: auto; padding-right: 2px; }
.sap-row { height: 17px; display: flex; align-items: center; justify-content: space-between; overflow: hidden; }
.tools { display: flex; align-items: center; height: 16px; background: #f8f8f8; color: #444b58; }
.tools.mid { color: #8c8c8c; }
.tools button { width: 15px; height: 15px; flex: none; }
.tools svg { width: 13px; height: 13px; }
.tools .pressed { border: 1px solid #4f9bd0; background: #e6f1fa; }
.tools .disabled { color: #a2a2a2; }
.tools .caption { font-weight: bold; font-size: 9px; color: #333; }
.tools .grey { font-weight: normal; color: #999; }
.grip { width: 6px; height: 14px; flex: none; border-left: 2px dotted #bbb; }
.sep { width: 4px; height: 14px; flex: none; border-left: 1px solid #d5d5d5; }
.space { width: 4px; flex: none; }
.drop { width: 8px; flex: none; color: #222; text-align: center; line-height: 8px; }
.sap-body { flex: 1; min-height: 0; display: flex; margin-top: 1px; border-top: 1px solid #a8a8a8; }
.tools.vert { flex-direction: column; width: 17px; height: auto; align-self: stretch; padding-top: 1px; background: #f3f3f3; }
.vert button { height: 17px; width: 16px; }
.vert .grip { width: 14px; height: 5px; border-left: 0; border-top: 2px dotted #bbb; }
.vert .drop { width: 16px; height: 4px; line-height: 4px; text-align: right; }
.model { width: 237px; display: flex; flex-direction: column; border: solid #a5a5a5; border-width: 0 1px 1px; padding: 0 3px 3px; }
.model-tabs { height: 14px; margin-left: 8px; border-left: 1px solid #b5b5b5; border-bottom: 1px solid #b5b5b5; }
.model-title { height: 14px; line-height: 14px; padding-left: 1px; }
.tree { flex: 1; border: 1px solid #a5a5a5; background: #fff; padding: 0 4px; display: flex; align-items: flex-start; gap: 4px; color: #777; }
.tree-box { width: 6px; height: 6px; margin-top: 3px; border: 1px solid #aaa; line-height: 4px; text-align: center; }
.mdi { flex: 1; background: #fff; border-left: 1px solid #a5a5a5; }
.mdi-bar { height: 14px; background: #f0f0f0; border-bottom: 1px solid #a5a5a5; display: flex; align-items: center; justify-content: flex-end; gap: 4px; padding-right: 3px; color: #222; }
.mdi-bar svg { width: 7px; height: 7px; }
.status { height: 11px; flex: none; overflow: hidden; display: flex; align-items: flex-start; background: #f0f0f0; border-top: 1px solid #ccc; line-height: 12px; color: #333; font-family: Lato, sans-serif; }
.status-msg { flex: 1; padding-left: 11px; }
.status button { width: 22px; height: 13px; border-left: 1px solid #ccc; font-size: 10px; font-family: "DejaVu Sans", sans-serif; }
.pick { display: flex; align-items: center; height: 12px; padding: 0 2px 0 3px; border-left: 1px solid #aaa; background: #f6f6f6; }
.pick select { flex: 1; min-width: 0; appearance: none; height: 12px; }
.pick svg { width: 6px; height: 6px; }
.coord { width: 63px; }
.units { width: 50px; }

/* Hilti window */
.hilti {
  position: absolute;
  left: 40px; right: 58px; top: 64px; bottom: 87px;
  display: flex;
  flex-direction: column;
  background: #fefefe;
  border: 1px solid #8f8f8f;
  box-shadow: 0 3px 10px 1px rgba(0, 0, 0, .3);
}
.h-title { height: 18px; flex: none; display: flex; align-items: center; gap: 8px; padding-left: 6px; font-family: "Open Sans", "Noto Sans", sans-serif; font-size: 7px; color: #222; }
.app-ico { width: 9px; height: 9px; margin-right: -4px; }
.faded { color: #aaa; }
.h-head { height: 30px; flex: none; display: flex; align-items: center; padding-left: 5px; border-bottom: 2px solid #bcbcbc; }
.logo { width: 79px; height: 20px; }
.logo text { font: bold 14px "DejaVu Sans", sans-serif; fill: #fff; stroke: #fff; }
.product { width: 116px; padding-left: 19px; font-weight: 500; }
.h-file, .account, .smart, .lbl, .list, .legend { font-family: Inter, "Liberation Sans", sans-serif; font-size: 7px; }
.h-file { flex: 1; display: flex; align-items: center; gap: 9px; border-left: 1px solid #ddd; padding-left: 9px; height: 20px; white-space: nowrap; color: #555; }
.bare { color: #444; }
.h-file .bare:first-of-type { margin-left: 6px; }
.ask { width: 54px; height: 20px; background: #dbd1c6; color: #b81d33; font-weight: bold; margin-right: 6px; }
.account { width: 170px; height: 20px; display: flex; align-items: center; justify-content: space-between; border-left: 1px solid #ddd; padding: 0 7px 0 10px; color: #555; }
.dots { position: relative; width: 5px; flex-direction: column; gap: 1px; }
.dots i { width: 3px; height: 3px; border-radius: 50%; background: #333; }
.alert { position: absolute; left: 2px; top: -9px; width: 9px; height: 9px; border-radius: 50%; background: #d11a33; }

.h-body { flex: 1; min-height: 0; display: grid; grid-template-columns: 205px 1fr 170px; }
.left { display: flex; flex-direction: column; min-height: 0; background: #f0efed; }
.left-top { flex: 1; min-height: 0; display: flex; overflow: hidden; }
.rail { width: 30px; flex: none; border-right: 1px solid #e2e2e2; }
.rail button { width: 100%; height: 30px; border-bottom: 1px solid #e2e1df; color: #3d3d3d; }
.rail .on { background: #d0cfcd; }
.rail .off { color: #b3b1af; }
.bolt { width: 6px; height: 15px; }
.panel { flex: 1; min-width: 0; background: #fff; overflow: hidden; }
.panel h2 { height: 20px; display: flex; align-items: center; justify-content: space-between; padding: 0 2px 0 4px; background: #e1e0de; font-size: 8px; font-weight: 500; color: #444; }
.panel h2 svg { width: 8px; height: 8px; }
.smart { height: 29px; display: flex; align-items: center; padding: 0 7px 2px 10px; }
.beta { margin-left: 6px; height: 13px; line-height: 13px; padding: 0 5px; border-radius: 7px; background: #cfe2f3; color: #3d6185; }
.toggle { margin-left: auto; display: flex; width: 66px; height: 14px; border: 1px solid #b5b5b5; }
.toggle button { flex: 1; color: #777; }
.toggle .go { background: #0f9b2e; color: #fff; font-weight: bold; }
.lbl { height: 17px; line-height: 22px; padding-left: 10px; color: #777; }
.list { margin: 0 6px 0 9px; border: 1px solid #9a9a9a; }
.list label { position: relative; height: 22px; display: flex; align-items: center; gap: 5px; padding: 0 3px 0 5px; border-bottom: 1px solid #aaa; color: #444; }
.list label:last-child { height: 20px; border-bottom: 0; }
.list label:first-child { background: #d0cfcd; }
.list label > svg:first-child { width: 14px; height: 13px; }
input[type="radio"] { appearance: none; width: 10px; height: 10px; border: 1px solid #555; border-radius: 50%; background: #fff; }
.list input { margin-left: auto; flex: none; }
input[type="radio"]:checked { background: radial-gradient(circle, #333 0 3px, transparent 3px); }
.cursor { position: absolute; right: 2px; top: 12px; width: 8px; height: 12px; z-index: 1; }
.more { width: 150px; height: 21px; margin-left: 9px; gap: 5px; color: #3d3d3d; }
.more::before, .more::after { content: ""; flex: 1; height: 1px; background: #999; }
.more svg { width: 11px; height: 8px; }
.more + h2 { margin-top: 4px; }
.rec { height: 23px; line-height: 10px; display: flex; align-items: center; justify-content: space-between; padding-top: 3px; padding-right: 6px; }
.rec svg { width: 10px; height: 10px; color: #333; }
.card { height: 40px; margin: 0 7px 2px 9px; padding: 9px 3px 0 5px; display: grid; grid-template-columns: 1fr auto; align-items: start; align-content: start; background: #d2d3cd; border: 1px solid #c3c3bf; white-space: nowrap; font-weight: bold; color: #2b2b2b; }
.anchor { width: 48px; height: 12px; }
.card span { grid-row: 2; grid-column: 1 / 3; line-height: 12px; }
.card input { appearance: none; grid-row: 1; grid-column: 2; width: 9px; height: 9px; margin-top: 6px; background: #3b3b3b; }
.card input::after { content: ""; display: block; width: 6px; height: 3px; margin: 2px 0 0 2px; border: solid #fff; border-width: 0 0 1px 1px; transform: rotate(-45deg); }
.vscroll { width: 9px; margin-right: 1px; flex: none; display: flex; flex-direction: column; align-items: center; line-height: 10px; color: #555; }
.vscroll i { width: 8px; height: 56%; background: #bfbfbf; }
.vscroll .end { margin-top: auto; }
.advanced { width: 200px; height: 31px; display: flex; background: #231822; color: #fff; font-weight: bold; }
.advanced button { width: 30px; border-right: 1px solid #4a404a; }
.advanced .adv { flex: 1; width: auto; border: 0; }

.center { min-width: 0; display: flex; flex-direction: column; }
.stage { flex: 1; min-height: 0; position: relative; display: flex; flex-direction: column; justify-content: space-between; padding: 13px 6px 7px 1px; }
.scene { position: absolute; inset: 0; width: 100%; height: 100%; }
.scene text { stroke: none; fill: #222; font-family: "Liberation Sans", Arial, sans-serif; }
.dim { font-size: 11px; }
.ax { font-size: 8px; }
.stage-top, .stage-low { position: relative; }
.stage-top { display: flex; justify-content: space-between; align-items: flex-start; }
.tb { display: flex; gap: 3px; }
.tb > button { width: 25px; height: 20px; background: #e6e5e3; border: 1px solid #c6c6c4; }
.tb > .dis { background: #cdcccb; color: #aaa; }
.tb .sp { margin-left: 2px; }
.spin { width: 49px; margin-left: 1px; display: flex; border: 1px solid #c6c6c6; background: #fff; }
.spin input { flex: 1; padding-left: 4px; font-family: "Open Sans", sans-serif; }
.spin > div { width: 10px; display: flex; flex-direction: column; border-left: 1px solid #c6c6c6; }
.spin button { flex: 1; background: #f0f0f0; }
.spin button + button { border-top: 1px solid #c6c6c6; }
.to2d { width: 78px; height: 20px; margin-top: 5px; background: #4e4b4f; color: #fff; font-weight: bold; }
.search { width: 169px; padding: 8px 9px 9px; margin-right: 6px; background: #f1f0ef; border: 1px solid #d8d7d5; }
.search button { width: 100%; height: 24px; gap: 5px; background: #fff; border: 1px solid #666; border-top-color: #c0475a; border-left-color: #c0475a; color: #9c2238; font-size: 9px; font-weight: 500; }
.legend { display: flex; flex-direction: column; gap: 6px; width: 72px; margin-left: auto; margin-right: 1px; margin-bottom: 13px; color: #555; }
.legend div { display: flex; align-items: center; gap: 3px; height: 14px; white-space: nowrap; }
.pager { display: flex; justify-content: space-between; }
.pager button { width: 20px; height: 20px; background: #e2e1df; border: 1px solid #c2c2c0; }

.loads { height: 89px; flex: none; border-top: 2px solid #b5b5b5; }
table { width: 100%; table-layout: fixed; border-collapse: collapse; }
th, td { padding: 0 0 0 3px; text-align: left; font-weight: 500; color: #444; white-space: nowrap; }
.c20 { width: 20px; } .c30 { width: 30px; } .c27 { width: 27px; } .c40 { width: 40px; } .c49 { width: 49px; } .cname { width: 142px; }
.r1 { height: 20px; background: #e3e2e0; }
.r2 { height: 22px; background: #f2f1f0; }
.r3 { height: 22px; background: #fff; border-top: 1px solid #bbb; border-bottom: 1px solid #aaa; }
.r2 th { padding-left: 5px; }
.r2 .tot { padding-left: 50px; }
td.ty { padding: 0; background: #fff; border: 1px solid #aaa; }
.ty button, .sel button { width: 100%; height: 20px; }
td.in { padding: 0; border-left: 1px solid #aaa; }
td.in.b { padding-left: 4px; color: #222; }
.in input { width: 100%; height: 20px; padding-left: 5px; font-weight: 500; color: #333; }
.in .lcname { color: #999; }
td.num { padding-left: 8px; color: #222; font-weight: bold; }
td.rd { padding-left: 15px; }
.rd input { display: block; border-color: #999; }
.rd input:checked { background: radial-gradient(circle, #777 0 3px, transparent 3px); }
td.sel { padding: 0; background: #d0cfcd; }
td.gr { background: #c9c8c8; }
.tr svg { color: #bbb; }
.actions { height: 27px; flex: none; display: flex; align-items: center; justify-content: flex-end; gap: 9px; padding-right: 10px; background: #f0efee; }
.actions button { height: 20px; width: 104px; background: #e6e5e3; border: 1px solid #c9c8c6; font-weight: 500; }
.actions button:first-child { width: 90px; }

.right { border-left: 1px solid #bbb; background: #fefefe; }
.report { width: 100%; height: 38px; gap: 10px; padding-left: 12px; background: #4e4b4f; color: #fff; font-size: 9px; font-weight: bold; }
.report svg { width: 12px; height: 8px; }
.files { display: grid; grid-template-columns: 1fr 1fr 1fr; height: 24px; background: #e6e5e3; border-bottom: 1px solid #ccc; }
.files button { border-right: 1px solid #c4c4c2; color: #3d3d3d; }

/* Taskbar */
.taskbar { height: 29px; flex: none; display: flex; background: #222224; }
.taskbar button { position: relative; width: 35px; }
.taskbar .sys { width: 34px; }
.taskbar svg { width: 18px; height: 18px; }
.taskbar .run { background: linear-gradient(#7fb2dc, #7fb2dc) no-repeat center bottom / 28px 3px; }
.taskbar .cur { background-color: #505052; }
.taskbar .mail { background: #ad6424; box-shadow: inset 0 -3px #e88a2e; }
.badge { position: absolute; left: 17px; top: 12px; width: 12px; height: 12px; border-radius: 50%; background: #d0282e; color: #fff; line-height: 12px; font-weight: normal; }
.badge.dark { background: #2b2b2b; border: 1px solid #888; line-height: 10px; }
.clock { margin-left: auto; width: 42px; display: flex; flex-direction: column; align-items: center; justify-content: space-around; color: #eee; font-family: "Open Sans", sans-serif; }
```
